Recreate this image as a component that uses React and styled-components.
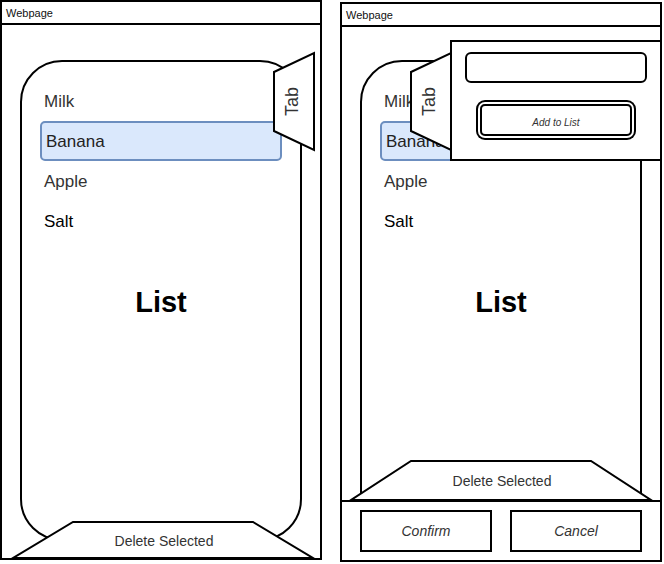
import React from 'react';
import styled, { createGlobalStyle, css } from 'styled-components';

const GlobalStyle = createGlobalStyle`
  html, body { margin: 0; padding: 0; background: #fff; }
  body { font-family: "Liberation Sans", Arial, Helvetica, sans-serif; }
  *, *::before, *::after { box-sizing: border-box; }
`;

const Page = styled.div`
  display: flex;
  align-items: flex-start;
  gap: 18px;
  width: 664px;
  height: 564px;
`;

const Frame = styled.div`
  position: relative;
  width: 322px;
  height: 560px;
  margin-top: ${p => p.$offset}px;
  border: 2px solid #000;
  background: #fff;
  display: flex;
  flex-direction: column;
`;

const TitleBar = styled.div`
  flex: none;
  height: 23px;
  border-bottom: 2px solid #000;
  padding-left: 4px;
  display: flex;
  align-items: center;
  font-size: 11px;
  color: #111;
`;

const Body = styled.div`
  position: relative;
  flex: 1;
  min-height: 0;
  overflow: hidden;
`;

const ListCard = styled.div`
  margin: ${p => p.$top}px 0 0 18px;
  width: 282px;
  height: 481px;
  border: 2px solid #000;
  border-radius: 42px;
  padding-top: 19px;
`;

const Items = styled.div`
  display: flex;
  flex-direction: column;
  padding: 0 18px;
`;

const Item = styled.div`
  height: 40px;
  display: flex;
  align-items: center;
  padding: 2px 0 0 4px;
  font-size: 17px;
  color: ${p => (p.$dark ? '#000' : '#333')};
  ${p =>
    p.$selected &&
    css`
      background: #dae8fc;
      border: 2px solid #6c8ebf;
      border-radius: 5px;
      color: #222;
    `}
`;

const ListTitle = styled.div`
  margin-top: 44px;
  text-align: center;
  font-size: 29px;
  line-height: 34px;
  font-weight: bold;
  color: #000;
`;

const ShapeSvg = styled.svg`
  position: absolute;
  left: 0;
  top: 0;
  overflow: visible;
`;

const DeleteBar = styled.div`
  position: absolute;
  left: ${p => p.$left}px;
  bottom: 0;
  width: 300px;
  height: ${p => p.$h}px;
  display: flex;
  align-items: center;
  justify-content: center;
  padding: 2px 0 0 2px;
  font-size: 14px;
  color: #333;
`;

const Label = styled.span`
  position: relative;
  white-space: nowrap;
`;

const SideTab = styled.div`
  position: absolute;
  left: ${p => p.$left}px;
  top: ${p => p.$top}px;
  width: 42px;
  height: 99px;
  display: flex;
  align-items: center;
  justify-content: center;
  padding-right: 2px;
  z-index: 1;
`;

const TabLabel = styled.span`
  position: relative;
  transform: rotate(-90deg);
  font-size: 18px;
  color: #333;
  white-space: nowrap;
`;

const Popup = styled.div`
  position: absolute;
  left: 108px;
  top: 36px;
  right: -2px;
  height: 121px;
  border: 2px solid #000;
  background: #fff;
  display: flex;
  flex-direction: column;
  align-items: center;
  padding-top: 10px;
  gap: 21px;
  z-index: 2;
`;

const InputBox = styled.div`
  width: 182px;
  height: 31px;
  border: 2px solid #000;
  border-radius: 6px;
  background: #fff;
`;

const AddButton = styled.div`
  width: 152px;
  height: 32px;
  border: 2px solid #000;
  border-radius: 5px;
  box-shadow: 0 0 0 2px #fff, 0 0 0 4px #000;
  display: flex;
  align-items: center;
  justify-content: center;
  padding-top: 4px;
  font-size: 10px;
  font-style: italic;
  color: #333;
`;

const Footer = styled.div`
  flex: none;
  height: 60px;
  border-top: 2px solid #000;
  display: flex;
  gap: 18px;
  padding: 8px 18px;
`;

const FooterButton = styled.div`
  width: 132px;
  height: 42px;
  border: 2px solid #000;
  display: flex;
  align-items: center;
  justify-content: center;
  font-size: 14px;
  font-style: italic;
  color: #333;
`;

function DeleteSelected({ left, h }) {
  return (
    <DeleteBar $left={left} $h={h}>
      <ShapeSvg width={300} height={h} viewBox={`0 0 300 ${h}`}>
        <polygon
          points={`60,1 240,1 300,${h} 0,${h}`}
          fill="#fff"
          stroke="#000"
          strokeWidth="2"
        />
      </ShapeSvg>
      <Label>Delete Selected</Label>
    </DeleteBar>
  );
}

function Tab({ left, top }) {
  return (
    <SideTab $left={left} $top={top}>
      <ShapeSvg width={42} height={99} viewBox="0 0 42 99">
        <polygon
          points="1,20 41,1 41,98 1,79"
          fill="#fff"
          stroke="#000"
          strokeWidth="2"
        />
      </ShapeSvg>
      <TabLabel>Tab</TabLabel>
    </SideTab>
  );
}

function ListContent({ top }) {
  return (
    <ListCard $top={top}>
      <Items>
        <Item>Milk</Item>
        <Item $selected>Banana</Item>
        <Item>Apple</Item>
        <Item $dark>Salt</Item>
      </Items>
      <ListTitle>List</ListTitle>
    </ListCard>
  );
}

export default function App() {
  return (
    <>
      <GlobalStyle />
      <Page>
        <Frame $offset={0}>
          <TitleBar>Webpage</TitleBar>
          <Body>
            <ListContent top={35} />
            <DeleteSelected left={11} h={37} />
          </Body>
          <Tab left={271} top={50} />
        </Frame>

        <Frame $offset={2}>
          <TitleBar>Webpage</TitleBar>
          <Body>
            <ListContent top={33} />
            <DeleteSelected left={9} h={40} />
          </Body>
          <Footer>
            <FooterButton>Confirm</FooterButton>
            <FooterButton>Cancel</FooterButton>
          </Footer>
          <Tab left={68} top={48} />
          <Popup>
            <InputBox />
            <AddButton>Add to List</AddButton>
          </Popup>
        </Frame>
      </Page>
    </>
  );
}
